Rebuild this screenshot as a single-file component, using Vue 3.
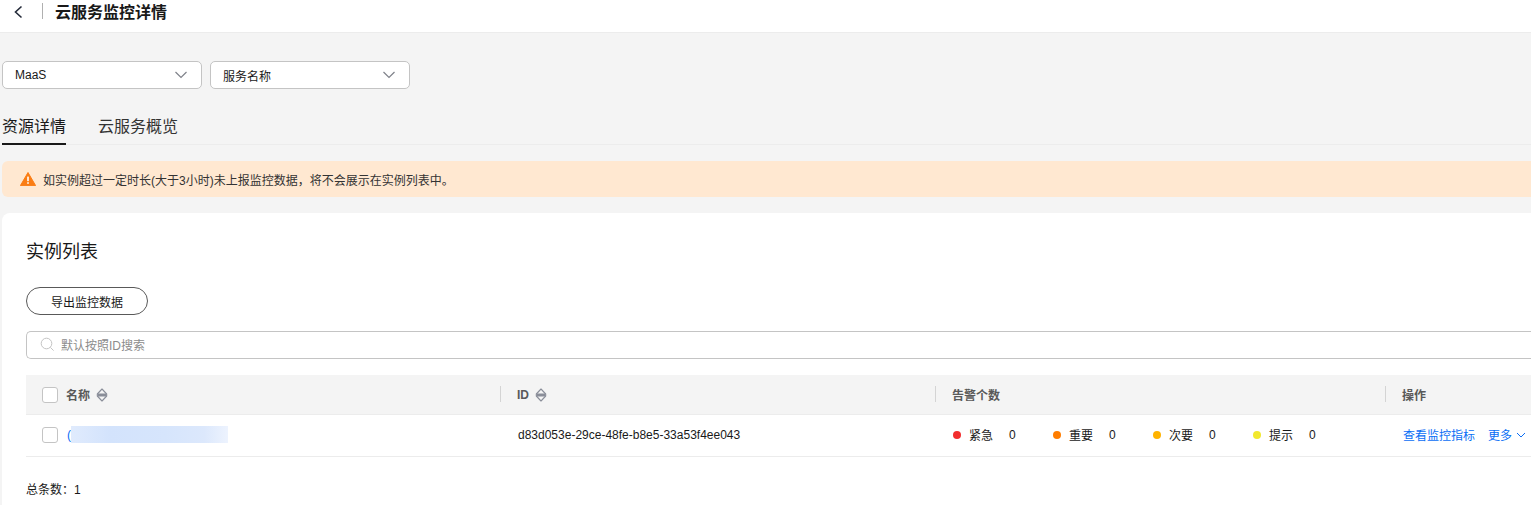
<script setup>
const selects = [
  { label: 'MaaS' },
  { label: '服务名称' }
]
const alarms = [
  { name: '紧急', color: '#f22e2e', count: 0 },
  { name: '重要', color: '#ff7d00', count: 0 },
  { name: '次要', color: '#ffb300', count: 0 },
  { name: '提示', color: '#f2e82e', count: 0 }
]
</script>

<template>
  <div class="page">
    <header class="topbar">
      <svg class="back" width="12" height="16" viewBox="0 0 12 16">
        <path d="M9.5 2.5 L3.5 8 L9.5 13.5" fill="none" stroke="#252b3a" stroke-width="1.6" />
      </svg>
      <span class="topbar-sep"></span>
      <h1 class="topbar-title">云服务监控详情</h1>
    </header>

    <main class="content">
      <div class="filters">
        <div v-for="s in selects" :key="s.label" class="select">
          <span>{{ s.label }}</span>
          <svg width="14" height="8" viewBox="0 0 14 8">
            <path d="M1.5 1 L7 6.5 L12.5 1" fill="none" stroke="#7f828a" stroke-width="1.2" />
          </svg>
        </div>
      </div>

      <div class="tabs">
        <span class="tab active">资源详情</span>
        <span class="tab">云服务概览</span>
      </div>

      <div class="alert">
        <svg width="16" height="14" viewBox="0 0 16 14">
          <path d="M8 0.5 L15.6 13.6 L0.4 13.6 Z" fill="#fa7d14" stroke="#fa7d14" stroke-linejoin="round" />
          <rect x="7.2" y="4.6" width="1.6" height="4.6" fill="#fff" />
          <rect x="7.2" y="10.2" width="1.6" height="1.6" fill="#fff" />
        </svg>
        <span>如实例超过一定时长(大于3小时)未上报监控数据，将不会展示在实例列表中。</span>
      </div>

      <section class="card">
        <h2 class="card-title">实例列表</h2>
        <button class="export">导出监控数据</button>
        <div class="search">
          <svg width="15" height="15" viewBox="0 0 15 15">
            <circle cx="6.5" cy="6.5" r="5.3" fill="none" stroke="#c4c4c4" stroke-width="1" />
            <path d="M10.4 10.4 L13.6 13.6" stroke="#c4c4c4" stroke-width="1" />
          </svg>
          <span>默认按照ID搜索</span>
        </div>

        <div class="table">
          <div class="row head">
            <div class="cell c-name">
              <span class="check"></span>
              <span>名称</span>
              <svg class="sort" width="12" height="14" viewBox="0 0 12 14">
                <path d="M6 1 L10.7 6 V8 L6 13 L1.3 8 V6 Z" fill="none" stroke="#8a8e99" stroke-width="1.1" stroke-linejoin="round" />
                <rect x="1.5" y="5.5" width="9" height="3" fill="#8a8e99" />
              </svg>
            </div>
            <div class="cell c-id">
              <span>ID</span>
              <svg class="sort" width="12" height="14" viewBox="0 0 12 14">
                <path d="M6 1 L10.7 6 V8 L6 13 L1.3 8 V6 Z" fill="none" stroke="#8a8e99" stroke-width="1.1" stroke-linejoin="round" />
                <rect x="1.5" y="5.5" width="9" height="3" fill="#8a8e99" />
              </svg>
            </div>
            <div class="cell c-alarm">告警个数</div>
            <div class="cell c-op">操作</div>
          </div>
          <div class="row body">
            <div class="cell c-name">
              <span class="check"></span>
              <span class="link paren">(</span>
              <span class="blur"></span>
            </div>
            <div class="cell c-id">d83d053e-29ce-48fe-b8e5-33a53f4ee043</div>
            <div class="cell c-alarm">
              <div v-for="a in alarms" :key="a.name" class="alarm">
                <i class="dot" :style="{ background: a.color }"></i>
                <span class="alarm-name">{{ a.name }}</span>
                <span>{{ a.count }}</span>
              </div>
            </div>
            <div class="cell c-op">
              <span class="link">查看监控指标</span>
              <span class="link more">更多
                <svg width="10" height="6" viewBox="0 0 10 6">
                  <path d="M1 1 L5 5 L9 1" fill="none" stroke="#0a6ef5" stroke-width="1" />
                </svg>
              </span>
            </div>
          </div>
        </div>

        <div class="total">总条数：<span class="total-num">1</span></div>
      </section>
    </main>
  </div>
</template>

<style>
html,
body {
  margin: 0;
  background: #f4f4f4;
  overflow: hidden;
}
</style>

<style scoped>
.page {
  width: 1531px;
  height: 505px;
  overflow: hidden;
  font-family: "Liberation Sans", "Noto Sans CJK SC", sans-serif;
  font-size: 12px;
  color: #191919;
}
.topbar {
  display: flex;
  align-items: center;
  height: 32px;
  background: #fff;
  border-bottom: 1px solid #ececec;
  padding-left: 12px;
}
.back {
  margin-bottom: 8px;
}
.topbar-sep {
  width: 1px;
  height: 16px;
  margin: 0 12px 10px 18px;
  background: #b0b0b0;
}
.topbar-title {
  margin: 0 0 11px;
  font-size: 16px;
  font-weight: 700;
  color: #191919;
}
.content {
  padding: 28px 0 0 2px;
}
.filters {
  display: flex;
  gap: 8px;
}
.select {
  display: flex;
  align-items: center;
  justify-content: space-between;
  box-sizing: border-box;
  width: 200px;
  height: 28px;
  padding: 0 13px 0 12px;
  background: #fff;
  border: 1px solid #c4c4c4;
  border-radius: 5px;
}
.tabs {
  display: flex;
  gap: 32px;
  margin-top: 24px;
  border-bottom: 1px solid #ececec;
}
.tab {
  padding: 3px 0 5px;
  font-size: 16px;
  line-height: 22px;
  color: #333;
}
.tab.active {
  color: #191919;
  border-bottom: 2px solid #191919;
  margin-bottom: -1px;
}
.alert {
  display: flex;
  align-items: center;
  gap: 7px;
  height: 36px;
  margin-top: 16px;
  padding-left: 18px;
  background: #ffe8d1;
  border-radius: 6px 0 0 6px;
  color: #333;
}
.card {
  margin-top: 16px;
  padding: 27px 0 0 24px;
  height: 300px;
  background: #fff;
  border-radius: 8px 0 0 0;
}
.card-title {
  margin: 0;
  font-size: 18px;
  font-weight: 400;
  line-height: 24px;
}
.export {
  display: block;
  width: 122px;
  height: 28px;
  margin-top: 23px;
  padding: 0;
  font: inherit;
  color: #191919;
  background: #fff;
  border: 1px solid #595959;
  border-radius: 14px;
}
.search {
  display: flex;
  align-items: center;
  gap: 6px;
  box-sizing: border-box;
  height: 28px;
  margin-top: 16px;
  padding: 0 0 1px 13px;
  color: #8c8c8c;
  border: 1px solid #c4c4c4;
  border-right: 0;
  border-radius: 5px 0 0 5px;
}
.table {
  margin-top: 16px;
}
.row {
  display: grid;
  grid-template-columns: 474px 435px 450px 160px;
}
.head {
  height: 40px;
  box-sizing: border-box;
  background: #f4f4f4;
  border-bottom: 1px solid #ececec;
  font-weight: 700;
  color: #595959;
}
.body {
  height: 42px;
  box-sizing: border-box;
  padding-bottom: 2px;
  border-bottom: 1px solid #ececec;
}
.cell {
  display: flex;
  align-items: center;
  box-sizing: border-box;
  padding-left: 16px;
}
.head .c-id,
.head .c-alarm,
.head .c-op {
  position: relative;
  padding-left: 17px;
}
.head .c-id::before,
.head .c-alarm::before,
.head .c-op::before {
  content: "";
  position: absolute;
  left: 0;
  top: 11px;
  width: 1px;
  height: 16px;
  background: #d4d4d4;
}
.c-name {
  gap: 8px;
}
.check {
  box-sizing: border-box;
  width: 16px;
  height: 16px;
  background: #fff;
  border: 1px solid #c4c4c4;
  border-radius: 3px;
}
.sort {
  margin-left: -2px;
}
.c-id {
  gap: 6px;
}
.head .c-id .sort {
  margin-left: 0;
}
.body .c-id {
  padding-left: 18px;
}
.body .c-alarm {
  padding-left: 18px;
}
.body .c-op {
  padding-left: 18px;
}
.alarm {
  display: flex;
  align-items: center;
  width: 100px;
}
.dot {
  width: 8px;
  height: 8px;
  border-radius: 50%;
}
.alarm-name {
  width: 40px;
  margin-left: 8px;
}
.link {
  color: #0a6ef5;
}
.paren {
  margin-left: 1px;
}
.blur {
  width: 157px;
  height: 17px;
  margin-left: -8px;
  background: linear-gradient(90deg, #e0ebfd 0%, #d3e3fc 25%, #d6e5fc 60%, #dce8fc 85%, #edf3fe 100%);
}
.more {
  display: inline-flex;
  align-items: center;
  gap: 4px;
  margin-left: 13px;
}
.total {
  margin-top: 23px;
}
.total-num {
  color: #191919;
}
</style>
